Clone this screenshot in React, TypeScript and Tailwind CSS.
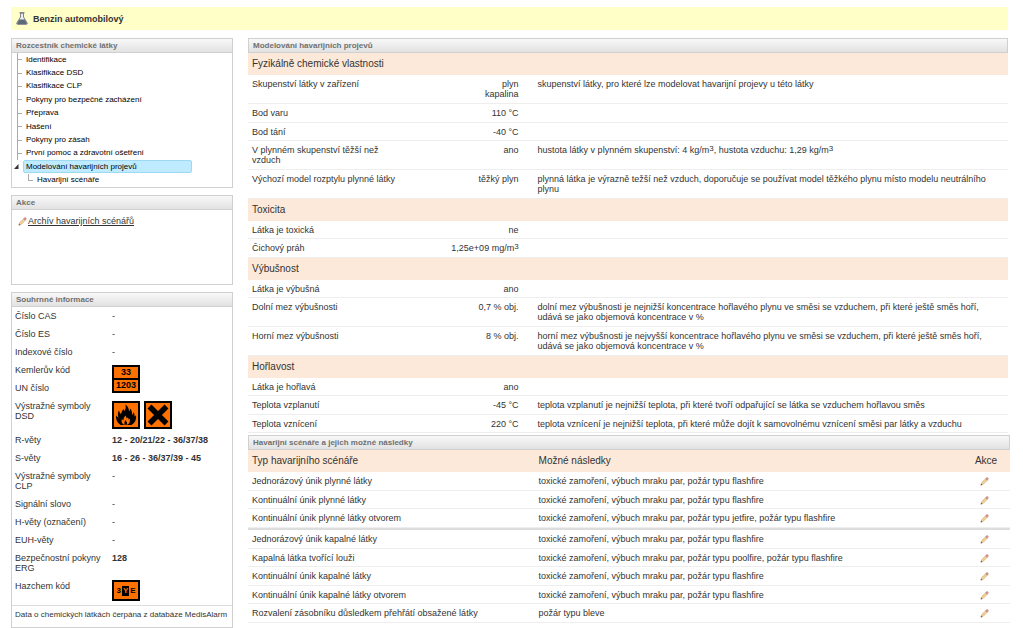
import type { ReactNode } from "react";
import { clsx } from "clsx";

type Row = {
  label: string;
  value: ReactNode;
  note?: ReactNode;
  tall?: boolean;
};

const treeItems = [
  "Identifikace",
  "Klasifikace DSD",
  "Klasifikace CLP",
  "Pokyny pro bezpečné zacházení",
  "Přeprava",
  "Hašení",
  "Pokyny pro zásah",
  "První pomoc a zdravotní ošetření",
];

const sections: { title: string; rows: Row[] }[] = [
  {
    title: "Fyzikálně chemické vlastnosti",
    rows: [
      {
        label: "Skupenství látky v zařízení",
        value: (
          <>
            plyn
            <br />
            kapalina
          </>
        ),
        note: "skupenství látky, pro které lze modelovat havarijní projevy u této látky",
        tall: true,
      },
      { label: "Bod varu", value: "110 °C" },
      { label: "Bod tání", value: "-40 °C" },
      {
        label: "V plynném skupenství těžší než vzduch",
        value: "ano",
        note: (
          <>
            hustota látky v plynném skupenství: 4 kg/m
            <Cubed />, hustota vzduchu: 1,29 kg/m
            <Cubed />
          </>
        ),
        tall: true,
      },
      {
        label: "Výchozí model rozptylu plynné látky",
        value: "těžký plyn",
        note: "plynná látka je výrazně težší než vzduch, doporučuje se používat model těžkého plynu místo modelu neutrálního plynu",
        tall: true,
      },
    ],
  },
  {
    title: "Toxicita",
    rows: [
      { label: "Látka je toxická", value: "ne" },
      {
        label: "Čichový práh",
        value: (
          <>
            1,25e+09 mg/m
            <Cubed />
          </>
        ),
      },
    ],
  },
  {
    title: "Výbušnost",
    rows: [
      { label: "Látka je výbušná", value: "ano" },
      {
        label: "Dolní mez výbušnosti",
        value: "0,7 % obj.",
        note: "dolní mez výbušnosti je nejnižší koncentrace hořlavého plynu ve směsi se vzduchem, při které ještě směs hoří, udává se jako objemová koncentrace v %",
        tall: true,
      },
      {
        label: "Horní mez výbušnosti",
        value: "8 % obj.",
        note: "horní mez výbušnosti je nejvyšší koncentrace hořlavého plynu ve směsi se vzduchem, při které ještě směs hoří, udává se jako objemová koncentrace v %",
        tall: true,
      },
    ],
  },
  {
    title: "Hořlavost",
    rows: [
      { label: "Látka je hořlavá", value: "ano" },
      {
        label: "Teplota vzplanutí",
        value: "-45 °C",
        note: "teplota vzplanutí je nejnižší teplota, při které tvoří odpařující se látka se vzduchem hořlavou směs",
      },
      {
        label: "Teplota vznícení",
        value: "220 °C",
        note: "teplota vznícení je nejnižší teplota, při které může dojít k samovolnému vznícení směsi par látky a vzduchu",
      },
    ],
  },
];

// gas scenarios first, liquid ones below the divider
const scenarioGroups = [
  [
    ["Jednorázový únik plynné látky", "toxické zamoření, výbuch mraku par, požár typu flashfire"],
    ["Kontinuální únik plynné látky", "toxické zamoření, výbuch mraku par, požár typu flashfire"],
    [
      "Kontinuální únik plynné látky otvorem",
      "toxické zamoření, výbuch mraku par, požár typu jetfire, požár typu flashfire",
    ],
  ],
  [
    ["Jednorázový únik kapalné látky", "toxické zamoření, výbuch mraku par, požár typu flashfire"],
    [
      "Kapalná látka tvořící louži",
      "toxické zamoření, výbuch mraku par, požár typu poolfire, požár typu flashfire",
    ],
    ["Kontinuální únik kapalné látky", "toxické zamoření, výbuch mraku par, požár typu flashfire"],
    [
      "Kontinuální únik kapalné látky otvorem",
      "toxické zamoření, výbuch mraku par, požár typu flashfire",
    ],
    ["Rozvalení zásobníku důsledkem přehřátí obsažené látky", "požár typu bleve"],
  ],
];

export default function App() {
  return (
    <div className="pl-[11px] pr-[13px] pt-[7px] bg-white text-[#333] text-[9px] leading-[10px] font-['Liberation_Sans',Arial,sans-serif]">
      {/* Title bar */}
      <header className="flex items-center h-[23px] mr-0.5 pl-[5px] gap-[5px] bg-[#ffffc8]">
        <FlaskIcon />
        <h1 className="font-bold">Benzin automobilový</h1>
      </header>
      <div className="flex items-start gap-[15px] mt-2">
        <aside className="w-[222px] shrink-0 flex flex-col gap-[7px]">
          <NavTree />
          <Actions />
          <Summary />
        </aside>
        <main className="flex-1 min-w-0">
          <Effects />
          <Scenarios />
        </main>
      </div>
    </div>
  );
}

function Cubed() {
  return <sup className="text-[8px] leading-none top-[-2px]">3</sup>;
}

function PanelTitle({ children }: { children: ReactNode }) {
  return (
    <h2 className="flex items-center h-[15px] px-1 border border-[#d0d0d0] bg-linear-to-b from-[#f8f8f8] to-[#e2e2e2] text-[8px] font-bold text-[#707070]">
      {children}
    </h2>
  );
}

function NavTree() {
  return (
    <nav>
      <PanelTitle>Rozcestník chemické látky</PanelTitle>
      <ul className="grid auto-rows-fr h-[135px] pl-[5px] border border-t-0 border-[#d0d0d0] text-[8px] text-black">
        {treeItems.map((item) => (
          <li key={item} className="flex items-center">
            <span className="flex items-center self-stretch w-[5px] mr-1 border-l border-[#aaa]">
              <span className="h-px flex-1 bg-[#aaa]" />
            </span>
            <a href="#">{item}</a>
          </li>
        ))}
        <li className="flex items-center">
          <svg className="-ml-1 mr-1" width="6" height="6" viewBox="0 0 6 6">
            <path d="M5.500 0v5H1z" fill="#333" />
          </svg>
          <a
            href="#"
            className="flex items-center h-[13px] w-[169px] pl-0.5 rounded-xs border border-[#9dd9f0] bg-[#beebff]"
          >
            Modelování havarijních projevů
          </a>
        </li>
        <li className="flex items-start pl-[11px]">
          <span className="w-[5px] h-[7px] mr-1 border-l border-b border-[#aaa]" />
          <a href="#" className="self-center">
            Havarijní scénáře
          </a>
        </li>
      </ul>
    </nav>
  );
}

function Actions() {
  return (
    <section>
      <PanelTitle>Akce</PanelTitle>
      <div className="h-[75px] px-1.5 pt-1.5 border border-t-0 border-[#d0d0d0]">
        <a href="#" className="flex items-center gap-px underline">
          <PencilIcon />
          Archív havarijních scénářů
        </a>
      </div>
    </section>
  );
}

function InfoRow({ label, children }: { label: string; children?: ReactNode }) {
  return (
    <tr className="align-top">
      <th className="w-[97px] px-[3px] py-1 text-left font-normal">{label}</th>
      <td className={clsx("pl-[3px] py-1", children && "font-bold")}>{children ?? "-"}</td>
    </tr>
  );
}

function Summary() {
  return (
    <section>
      <PanelTitle>Souhrnné informace</PanelTitle>
      <div className="border border-t-0 border-[#d0d0d0]">
        <table className="w-full table-fixed">
          <tbody>
            <InfoRow label="Číslo CAS" />
            <InfoRow label="Číslo ES" />
            <InfoRow label="Indexové číslo" />
            <tr className="align-top">
              <th className="px-[3px] py-1 text-left font-normal">Kemlerův kód</th>
              <td rowSpan={2} className="pl-[3px] pt-1">
                <div className="flex flex-col gap-0.5 w-7 border-2 border-black bg-black text-center leading-[11px] font-bold text-black">
                  <span className="bg-[#ff7200]">33</span>
                  <span className="bg-[#ff7200]">1203</span>
                </div>
              </td>
            </tr>
            <tr className="align-top">
              <th className="px-[3px] py-1 text-left font-normal">UN číslo</th>
            </tr>
            <tr className="align-top">
              <th className="px-[3px] py-1 text-left font-normal">Výstražné symboly DSD</th>
              <td className="pl-[3px] pt-1 pb-0.5">
                <div className="flex gap-1">
                  <FlameSign />
                  <CrossSign />
                </div>
              </td>
            </tr>
            <InfoRow label="R-věty">12 - 20/21/22 - 36/37/38</InfoRow>
            <InfoRow label="S-věty">16 - 26 - 36/37/39 - 45</InfoRow>
            <InfoRow label="Výstražné symboly CLP" />
            <InfoRow label="Signální slovo" />
            <InfoRow label="H-věty (označení)" />
            <InfoRow label="EUH-věty" />
            <InfoRow label="Bezpečnostní pokyny ERG">128</InfoRow>
            <tr className="align-top">
              <th className="px-[3px] py-1 text-left font-normal">Hazchem kód</th>
              <td className="pl-[3px] pt-[3px] pb-1">
                <div className="flex items-center justify-center gap-px w-7 h-[21px] border-2 border-black bg-[#ff7200] text-[8px] font-bold text-black">
                  <span>3</span>
                  <span className="px-px bg-black text-[#ff7200]">Y</span>
                  <span>E</span>
                </div>
              </td>
            </tr>
          </tbody>
        </table>
        <p className="h-[22px] px-[3px] pt-1 border-t border-[#ddd] text-[8px] whitespace-nowrap">
          Data o chemických látkách čerpána z databáze MedisAlarm
        </p>
      </div>
    </section>
  );
}

function Effects() {
  return (
    <section className="mr-0.5 mb-0.5">
      <PanelTitle>Modelování havarijních projevů</PanelTitle>
      <table className="w-full table-fixed border-separate border-spacing-0">
        <colgroup>
          <col className="w-[20%]" />
          <col className="w-[16%]" />
          <col />
        </colgroup>
        {sections.map((section) => (
          <tbody key={section.title}>
            <tr className="h-[22px] bg-[#fde9d9]">
              <th colSpan={3} className="px-1 text-left text-[10px] font-normal">
                {section.title}
              </th>
            </tr>
            {section.rows.map((row) => (
              <tr
                key={row.label}
                className={clsx("align-top", row.tall ? "h-[29px]" : "h-[18px] odd:h-[19px]")}
              >
                <th className="px-1 pt-1 pb-[3px] border-b border-[#eee] text-left font-normal">
                  {row.label}
                </th>
                <td className="px-[3px] pt-1 pb-[3px] border-b border-[#eee] text-right">
                  {row.value}
                </td>
                <td className="pl-4 pr-2 pt-1 pb-[3px] border-b border-[#eee]">{row.note}</td>
              </tr>
            ))}
          </tbody>
        ))}
      </table>
    </section>
  );
}

function Scenarios() {
  return (
    <section>
      <PanelTitle>Havarijní scénáře a jejich možné následky</PanelTitle>
      <table className="w-full table-fixed border-separate border-spacing-0">
        <thead>
          <tr className="h-[22px] bg-[#fde9d9] text-left text-[10px]">
            <th className="w-[38%] px-1 font-normal">Typ havarijního scénáře</th>
            <th className="pl-px font-normal">Možné následky</th>
            <th className="w-12 text-center font-normal">Akce</th>
          </tr>
        </thead>
        {scenarioGroups.map((group, i) => (
          <tbody key={i}>
            {group.map(([name, effects]) => (
              <tr key={name} className="align-top h-[18px] odd:h-[19px]">
                <td className="px-1 pt-1 pb-[3px] border-b border-[#eee]">{name}</td>
                <td className="pl-px pt-1 pb-[3px] border-b border-[#eee]">{effects}</td>
                <td className="pr-[3px] pt-[5px] pb-[3px] border-b border-[#eee]">
                  <button type="button" aria-label="Upravit" className="block mx-auto">
                    <PencilIcon />
                  </button>
                </td>
              </tr>
            ))}
            {i === 0 && (
              <tr>
                <td colSpan={3} className="h-0.5 bg-[#ddd]" />
              </tr>
            )}
          </tbody>
        ))}
      </table>
    </section>
  );
}

function PencilIcon() {
  return (
    <svg width="9" height="9" viewBox="0 0 9 9">
      <path d="M1 8l.6-2.200L5.900 1.600l1.500 1.500-4.200 4.200z" fill="#f6d59a" stroke="#c09458" strokeWidth=".6" />
      <path d="M5.700 1.700L6.800.6q.6-.3 1.100.3.600.6.3 1.100L7.300 3.300z" fill="#e8928c" stroke="#b07a78" strokeWidth=".5" />
      <path d="M.6 8.400l.5-1.600L2.200 7.900z" fill="#555" />
    </svg>
  );
}

function FlaskIcon() {
  return (
    <svg width="12" height="13" viewBox="0 0 12 13">
      <path d="M4.500 1v4L.8 11q-.4 1.400 1 1.400h8.400q1.400 0 1-1.400L7.500 5V1z" fill="#e8edf2" stroke="#778" strokeWidth=".9" />
      <path d="M3.200 7.600h5.600l2.100 3.600q.1.800-.6.800H1.700q-.7 0-.6-.8z" fill="#5d6b79" />
      <path d="M3.500.8h5" stroke="#778" strokeWidth="1.200" />
    </svg>
  );
}

function FlameSign() {
  return (
    <svg width="28" height="28" viewBox="0 0 28 28">
      <path d="M1 1h26v26H1z" fill="#ff7200" stroke="#000" strokeWidth="2" />
      <path d="M8.500 24Q3.500 20.500 4 14.500q1 1.500 2.500 2Q5 12.500 7 9.500q.5 2.500 2 3.500.5-3 2.500-5 .2 1.500 1 2Q14.500 7 13.500 3.500 17 6 17 10.500q1.200-1 1-3Q20.500 10 20 14q1.500-1 1.500-3 1.500 2 1 4.500 1-.5 1.500-1.500 1 6.500-4.500 10z" />
      <path d="M11.500 23.500q-3-2.500-1.500-5.500.6 1.200 1.500 1.500-.3-3.300 2.500-5-.2 2 1 3 .7-.5.7-1.500 1 1 .8 2.500.8-.2 1.200-1 1 3.500-1.700 6z" fill="#ff7200" />
      <path d="M13 23.500q-1.500-1.500 0-3.500l1-1q0 1.500 1 2.500.3 1-.5 2z" />
    </svg>
  );
}

function CrossSign() {
  return (
    <svg width="28" height="28" viewBox="0 0 28 28">
      <path d="M1 1h26v26H1z" fill="#ff7200" stroke="#000" strokeWidth="2" />
      <path d="M5.500 5.500l17 17M22.500 5.500l-17 17" stroke="#000" strokeWidth="5.500" />
    </svg>
  );
}
